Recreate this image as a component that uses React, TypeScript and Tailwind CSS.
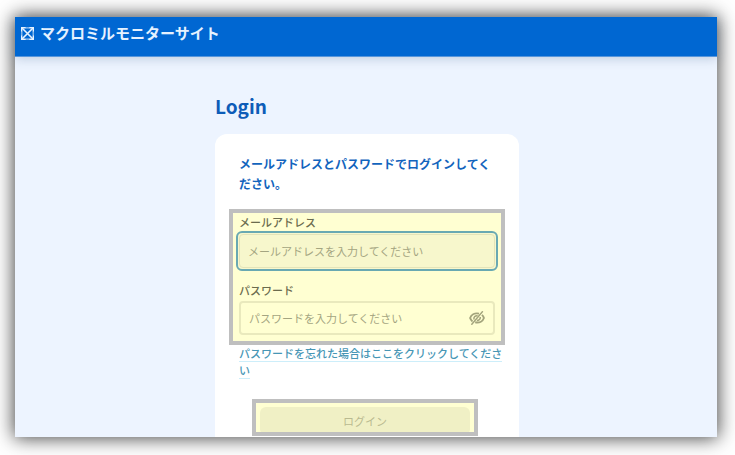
import { useState } from 'react';

function LogoIcon() {
  return (
    <svg viewBox="0 0 13 13" className="w-[13px] h-[13px] flex-shrink-0" fill="none" stroke="#e6f2ff" aria-hidden="true">
      <path d="M0.7 4.8V0.7H4.8M8.2 0.7h4.1v4.1M12.3 8.2v4.1H8.2M4.8 12.3H0.7V8.2" strokeWidth="1.4" />
      <path d="M1 1l11 11M12 1L1 12" strokeWidth="1.6" />
      <path d="M4.8 0.8h3.4M4.8 12.2h3.4M0.8 4.8v3.4M12.2 4.8v3.4" strokeWidth="1.2" opacity="0.7" />
    </svg>
  );
}

function EyeOffIcon() {
  return (
    <svg viewBox="0 0 16 14" className="w-4 h-[14px]" fill="none" stroke="#a3a47c" aria-hidden="true">
      <path d="M10 2.6C5.4 1.600 2.200 4 1.100 7c.4 1.300 1.200 2.500 2.400 3.400" strokeWidth="1.900" />
      <path d="M13 3.900c.9.900 1.600 1.900 1.900 3.100-1 3-4.200 5.200-8.700 4.300" strokeWidth="1.900" />
      <path d="M8.600 4.700C6.200 4.300 4.600 6.200 4.900 8.500M11.300 6c.2 2-1.200 3.500-3.400 3.500" strokeWidth="1.500" />
      <path d="M2.400 13.800L13.800 0.200" strokeWidth="1.400" />
    </svg>
  );
}

export default function App() {
  const [email, setEmail] = useState('');
  const [password, setPassword] = useState('');
  const [visible, setVisible] = useState(false);

  return (
    <div className="pt-[17px] pb-[18px] pl-[15px] pr-[18px] bg-white overflow-hidden font-['Noto_Sans_CJK_JP','Noto_Sans',sans-serif]">
      <div className="bg-[#edf4ff] shadow-[0_0_18px_1px_rgba(0,0,0,0.75)]">
        <header className="h-10 pb-[7px] pl-1.5 flex items-center gap-1.5 bg-[#0067d2] border-b border-[#5796dc] shadow-[0_2px_10px_rgba(60,90,130,0.25)]">
          <LogoIcon />
          <span className="text-[15px] leading-5 font-bold text-[#e6f2ff]">マクロミルモニターサイト</span>
        </header>

        <main className="pt-[35px] pl-0.5">
          <div className="w-full max-w-[304px] mx-auto">
            <h1 className="text-[19px] leading-7 font-bold text-[#0d5cb8]">Login</h1>

            <form
              onSubmit={(e) => e.preventDefault()}
              className="mt-[14px] pt-5 pb-px bg-white rounded-t-xl"
            >
              <p className="mx-6 text-xs leading-5 font-bold text-[#1264bd]">
                メールアドレスとパスワードでログインしてください。
              </p>

              <div className="mt-[15px] mx-[14px] px-[3px] pb-1.5 border-4 border-[#bfbfbf] bg-[#ffffd2]">
                <label htmlFor="email" className="block mx-[3px] text-[11px] leading-[18px] font-medium text-[#6b6c4e]">
                  メールアドレス
                </label>
                <div className="p-px border-2 border-[#69a9b2] rounded-md bg-[#f7f7cc]">
                  <input
                    id="email"
                    type="email"
                    value={email}
                    onChange={(e) => setEmail(e.target.value)}
                    placeholder="メールアドレスを入力してください"
                    className="block w-full h-[34px] px-2 border border-[#e4e4b9] rounded-sm text-[11px] text-[#6b6c4e] placeholder:text-[#a4a581] outline-none"
                  />
                </div>

                <label htmlFor="password" className="block mt-2.5 mx-[3px] text-[11px] leading-[18px] font-medium text-[#6b6c4e]">
                  パスワード
                </label>
                <div className="mt-0.5 mx-[3px] h-[34px] px-2 flex items-center border-2 border-[#e9e9bd] rounded-sm">
                  <input
                    id="password"
                    type={visible ? 'text' : 'password'}
                    value={password}
                    onChange={(e) => setPassword(e.target.value)}
                    placeholder="パスワードを入力してください"
                    className="flex-1 min-w-0 text-[11px] text-[#6b6c4e] placeholder:text-[#a4a581] outline-none"
                  />
                  <button type="button" aria-label="パスワードを表示" onClick={() => setVisible(!visible)}>
                    <EyeOffIcon />
                  </button>
                </div>
              </div>

              <p className="ml-6 mr-3.5 text-[11px] leading-[17px] font-medium">
                <a href="#reset" className="text-[#4796b5] border-b border-[#cdeefa]">
                  パスワードを忘れた場合はここをクリックしてください
                </a>
              </p>

              <div className="pr-1 mt-5">
                <div className="mx-auto w-[226px] h-[37px] p-1 pb-0 border-4 border-[#bfbfbf] bg-[#ffffd2] overflow-hidden">
                  <button
                    type="submit"
                    className="block w-full h-7 rounded-md bg-[#f0f0c5] text-[11px] text-[#b9ba90]"
                  >
                    ログイン
                  </button>
                </div>
              </div>
            </form>
          </div>
        </main>
      </div>
    </div>
  );
}
